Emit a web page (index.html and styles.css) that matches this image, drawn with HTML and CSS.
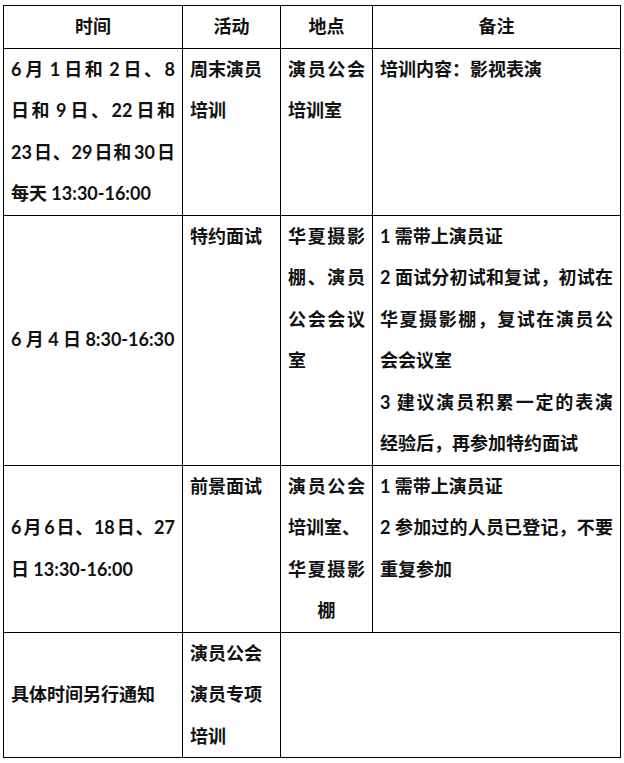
FILE: index.html
```html
<!DOCTYPE html>
<html lang="zh-CN">
<head>
<meta charset="utf-8">
<title>安排表</title>
<link rel="stylesheet" href="styles.css">
</head>
<body>
<div class="page">
<table class="schedule">
  <colgroup>
    <col class="c-time">
    <col class="c-act">
    <col class="c-place">
    <col class="c-note">
  </colgroup>
  <thead>
    <tr>
      <th>时间</th>
      <th>活动</th>
      <th>地点</th>
      <th>备注</th>
    </tr>
  </thead>
  <tbody>
    <tr>
      <td class="mid">
        <span class="ln j tight">6 月 1 日和 2 日、8</span>
        <span class="ln j tight">日和 9 日、22 日和</span>
        <span class="ln j tight">23 日、29 日和 30 日</span>
        <span class="ln">每天 13:30-16:00</span>
      </td>
      <td>
        <span class="ln">周末演员</span>
        <span class="ln">培训</span>
      </td>
      <td>
        <span class="ln j">演员公会</span>
        <span class="ln">培训室</span>
      </td>
      <td>
        <span class="ln">培训内容：影视表演</span>
      </td>
    </tr>
    <tr>
      <td class="mid">
        <span class="ln">6 月 4 日 8:30-16:30</span>
      </td>
      <td>
        <span class="ln">特约面试</span>
      </td>
      <td>
        <span class="ln j">华夏摄影</span>
        <span class="ln j">棚、演员</span>
        <span class="ln j">公会会议</span>
        <span class="ln">室</span>
      </td>
      <td>
        <span class="ln">1 需带上演员证</span>
        <span class="ln j">2 面试分初试和复试，初试在</span>
        <span class="ln j">华夏摄影棚，复试在演员公</span>
        <span class="ln">会会议室</span>
        <span class="ln j">3 建议演员积累一定的表演</span>
        <span class="ln">经验后，再参加特约面试</span>
      </td>
    </tr>
    <tr>
      <td class="mid">
        <span class="ln j tight">6 月 6 日、18 日、27</span>
        <span class="ln">日 13:30-16:00</span>
      </td>
      <td>
        <span class="ln">前景面试</span>
      </td>
      <td>
        <span class="ln j">演员公会</span>
        <span class="ln">培训室、</span>
        <span class="ln j">华夏摄影</span>
        <span class="ln c">棚</span>
      </td>
      <td>
        <span class="ln">1 需带上演员证</span>
        <span class="ln j">2 参加过的人员已登记，不要</span>
        <span class="ln">重复参加</span>
      </td>
    </tr>
    <tr>
      <td class="mid">
        <span class="ln">具体时间另行通知</span>
      </td>
      <td>
        <span class="ln">演员公会</span>
        <span class="ln">演员专项</span>
        <span class="ln">培训</span>
      </td>
      <td colspan="2"></td>
    </tr>
  </tbody>
</table>
</div>
</body>
</html>
```

FILE: styles.css
```css
html, body {
  margin: 0;
  padding: 0;
  background: #fff;
}

.page {
  padding: 5px 0 0 3px;
}

.schedule {
  border-collapse: collapse;
  table-layout: fixed;
  width: 618px;
  font-family: "Lato", "Noto Sans CJK SC", sans-serif;
  font-weight: 700;
  font-size: 18px;
  color: #111;
}

.c-time { width: 179px; }
.c-act { width: 98px; }
.c-place { width: 92px; }
.c-note { width: 248px; }

.schedule th,
.schedule td {
  border: 1px solid #000;
  padding: 0 7px;
  line-height: 41.5px;
  vertical-align: top;
  text-align: left;
  overflow: visible;
}

.schedule th {
  text-align: center;
  vertical-align: middle;
}

.schedule td.mid {
  vertical-align: middle;
}

.ln {
  display: block;
  white-space: nowrap;
}

.ln.j {
  text-align: justify;
  text-align-last: justify;
}

.ln.tight {
  word-spacing: -3px;
}

.ln.c {
  text-align: center;
}
```
